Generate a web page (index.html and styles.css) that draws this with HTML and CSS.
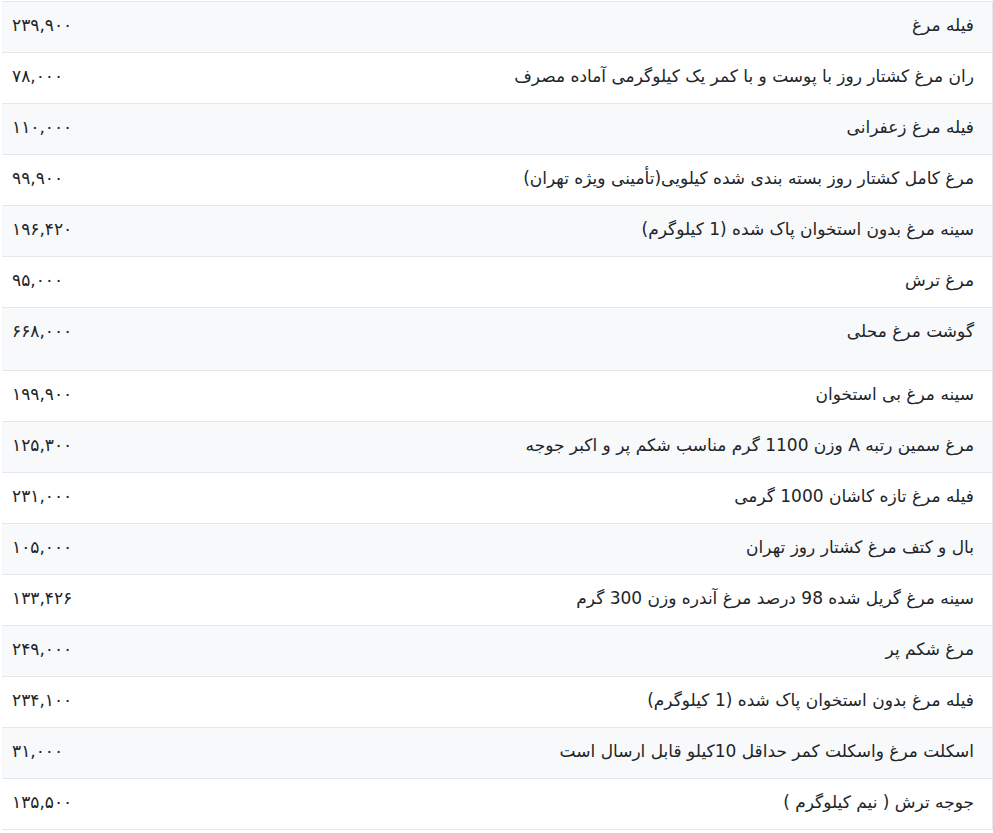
FILE: index.html
```html
<!DOCTYPE html>
<html lang="fa" dir="rtl">
<head>
<meta charset="utf-8">
<title>قیمت مرغ</title>
<link rel="stylesheet" href="styles.css">
</head>
<body>
<table class="prices">
<tbody>
<tr class="odd"><td class="name">فیله مرغ</td><td class="price">۲۳۹,۹۰۰</td></tr>
<tr><td class="name">ران مرغ کشتار روز با پوست و با کمر یک کیلوگرمی آماده مصرف</td><td class="price">۷۸,۰۰۰</td></tr>
<tr class="odd"><td class="name">فیله مرغ زعفرانی</td><td class="price">۱۱۰,۰۰۰</td></tr>
<tr><td class="name">مرغ کامل کشتار روز بسته بندی شده کیلویی(تأمینی ویژه تهران)</td><td class="price">۹۹,۹۰۰</td></tr>
<tr class="odd"><td class="name">سینه مرغ بدون استخوان پاک شده (1 کیلوگرم)</td><td class="price">۱۹۶,۴۲۰</td></tr>
<tr><td class="name">مرغ ترش</td><td class="price">۹۵,۰۰۰</td></tr>
<tr class="odd tall"><td class="name">گوشت مرغ محلی</td><td class="price">۶۶۸,۰۰۰</td></tr>
<tr><td class="name">سینه مرغ بی استخوان</td><td class="price">۱۹۹,۹۰۰</td></tr>
<tr class="odd"><td class="name">مرغ سمین رتبه A وزن 1100 گرم مناسب شکم پر و اکبر جوجه</td><td class="price">۱۲۵,۳۰۰</td></tr>
<tr><td class="name">فیله مرغ تازه کاشان 1000 گرمی</td><td class="price">۲۳۱,۰۰۰</td></tr>
<tr class="odd"><td class="name">بال و کتف مرغ کشتار روز تهران</td><td class="price">۱۰۵,۰۰۰</td></tr>
<tr><td class="name">سینه مرغ گریل شده 98 درصد مرغ آندره وزن 300 گرم</td><td class="price">۱۳۳,۴۲۶</td></tr>
<tr class="odd"><td class="name">مرغ شکم پر</td><td class="price">۲۴۹,۰۰۰</td></tr>
<tr><td class="name">فیله مرغ بدون استخوان پاک شده (1 کیلوگرم)</td><td class="price">۲۳۴,۱۰۰</td></tr>
<tr class="odd"><td class="name">اسکلت مرغ واسکلت کمر حداقل 10کیلو قابل ارسال است</td><td class="price">۳۱,۰۰۰</td></tr>
<tr><td class="name">جوجه ترش ( نیم کیلوگرم )</td><td class="price">۱۳۵,۵۰۰</td></tr>
</tbody>
</table>
</body>
</html>
```
FILE: styles.css
```css
html, body {
  margin: 0;
  padding: 0;
  background: #ffffff;
}

body {
  padding-top: 1px;
  font-family: "DejaVu Sans", "Noto Sans", sans-serif;
  font-size: 17px;
  color: #212529;
}

.prices {
  width: 991px;
  border-collapse: collapse;
  border-right: 1px solid #e3e6ea;
}

.prices tr {
  border-top: 1px solid #e3e6ea;
  border-bottom: 1px solid #e3e6ea;
}

.prices tr.odd {
  background: #f8f9fa;
}

.prices td {
  padding: 11px 0 15px;
  line-height: 24px;
  vertical-align: top;
}

.prices tr.tall td {
  padding-bottom: 27px;
}

.prices .name {
  text-align: right;
  padding-right: 18px;
}

.prices .price {
  width: 110px;
  text-align: left;
  padding-left: 10px;
}
```
